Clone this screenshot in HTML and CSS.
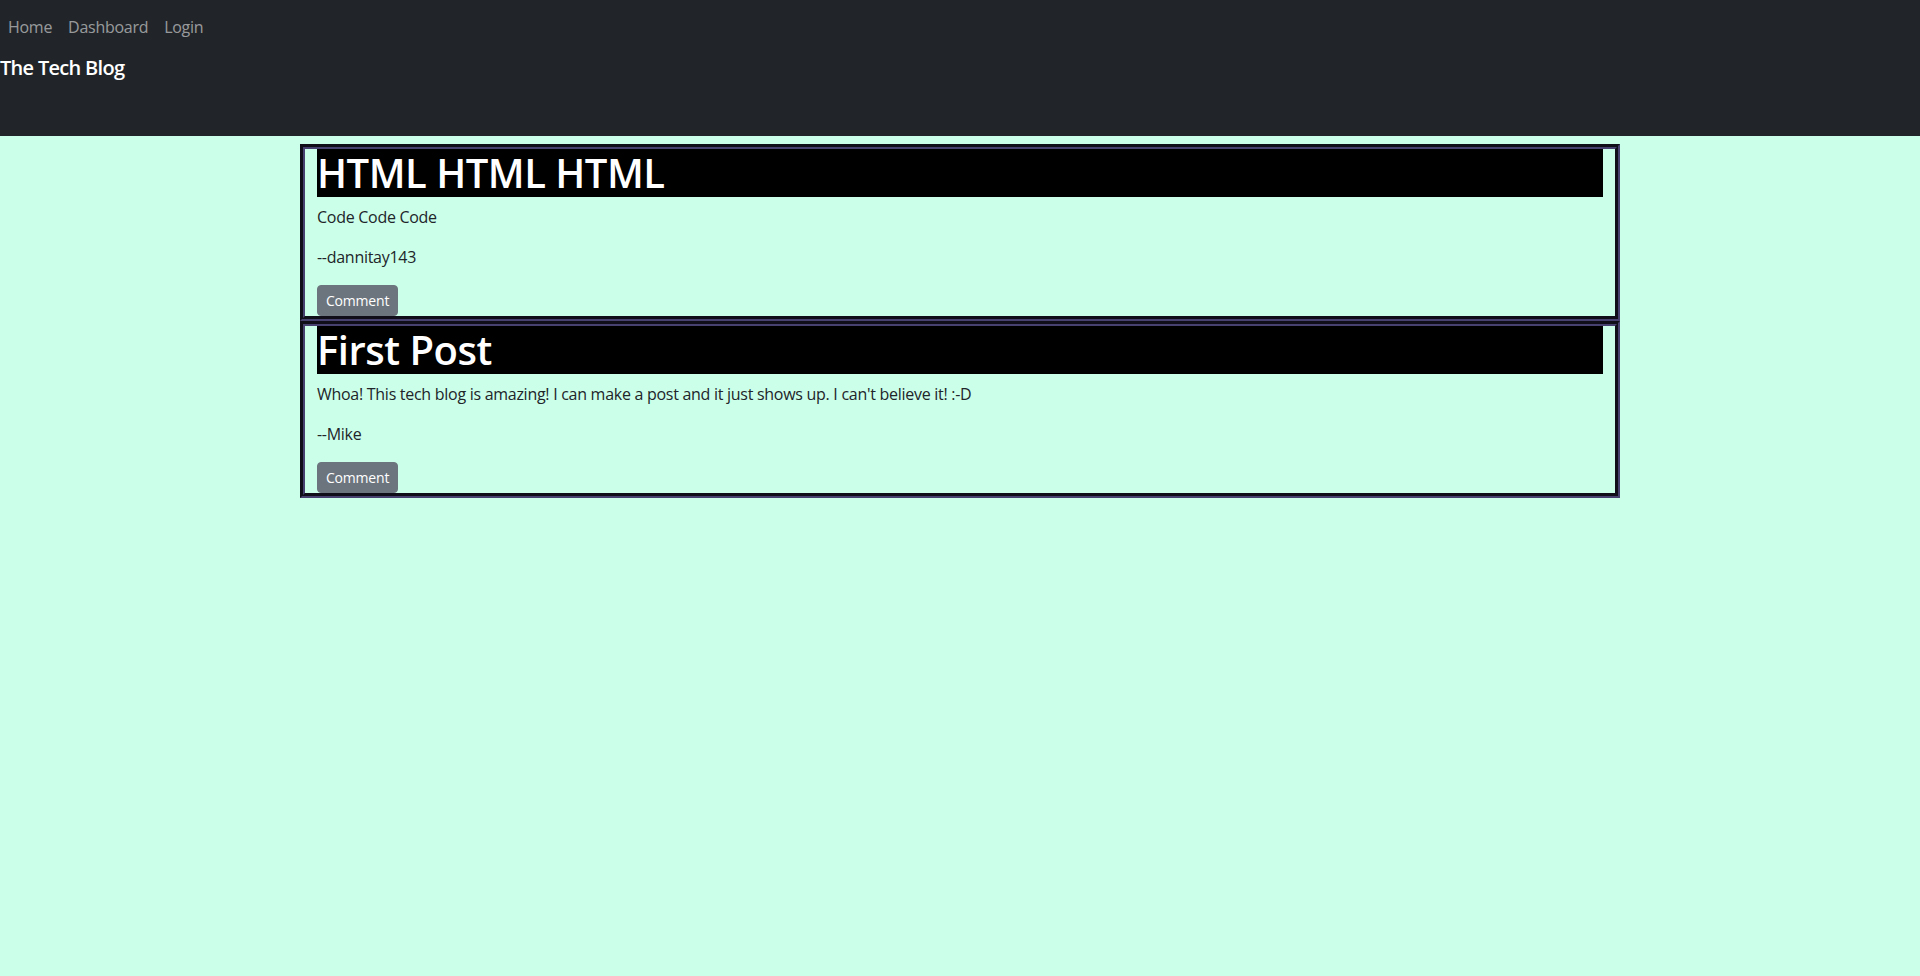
FILE: index.html
```html
<!DOCTYPE html>
<html lang="en">
<head>
<meta charset="utf-8">
<title>The Tech Blog</title>
<link rel="stylesheet" href="styles.css">
</head>
<body>
<header class="site-header">
  <nav class="site-nav">
    <a class="nav-link" href="#">Home</a>
    <a class="nav-link" href="#">Dashboard</a>
    <a class="nav-link" href="#">Login</a>
  </nav>
  <h1 class="brand">The Tech Blog</h1>
</header>
<main class="container">
  <article class="post">
    <h2 class="post-title">HTML HTML HTML</h2>
    <p class="post-body">Code Code Code</p>
    <p class="post-author">--dannitay143</p>
    <button class="btn-comment" type="button">Comment</button>
  </article>
  <article class="post">
    <h2 class="post-title">First Post</h2>
    <p class="post-body">Whoa! This tech blog is amazing! I can make a post and it just shows up. I can't believe it! :-D</p>
    <p class="post-author">--Mike</p>
    <button class="btn-comment" type="button">Comment</button>
  </article>
</main>
</body>
</html>
```

FILE: styles.css
```css
* { box-sizing: border-box; }

html, body {
  margin: 0;
  padding: 0;
}

body {
  background: #ccffe9;
  color: #212529;
  font-family: "Open Sans", "Noto Sans", sans-serif;
  font-size: 16px;
  line-height: 24px;
  letter-spacing: -0.28px;
  min-height: 976px;
}

.site-header {
  background: #212529;
  height: 136px;
  padding-top: 7px;
}

.site-nav {
  display: flex;
}

.nav-link {
  display: block;
  padding: 8px 8px;
  color: rgba(255, 255, 255, 0.55);
  text-decoration: none;
  font-size: 16px;
  line-height: 24px;
}

.brand {
  margin: 9px 0 0 0;
  color: #fff;
  font-size: 20px;
  line-height: 24px;
  font-weight: 600;
  letter-spacing: -0.7px;
}

.container {
  width: 1320px;
  margin: 8px auto 0;
}

.post {
  border: 5px groove #46416e;
  padding: 0 12px;
}

.post-title {
  margin: 0 0 8px 0;
  background: #000;
  color: #fff;
  font-size: 40px;
  line-height: 48px;
  font-weight: 600;
  letter-spacing: -0.5px;
}

.post-body,
.post-author {
  margin: 0 0 16px 0;
}

.btn-comment {
  display: block;
  height: 31px;
  padding: 4px 8px;
  border: 1px solid #6c757d;
  border-radius: 4px;
  background: #6c757d;
  color: #fff;
  font-family: inherit;
  font-size: 14px;
  line-height: 21px;
  letter-spacing: -0.2px;
}
```
